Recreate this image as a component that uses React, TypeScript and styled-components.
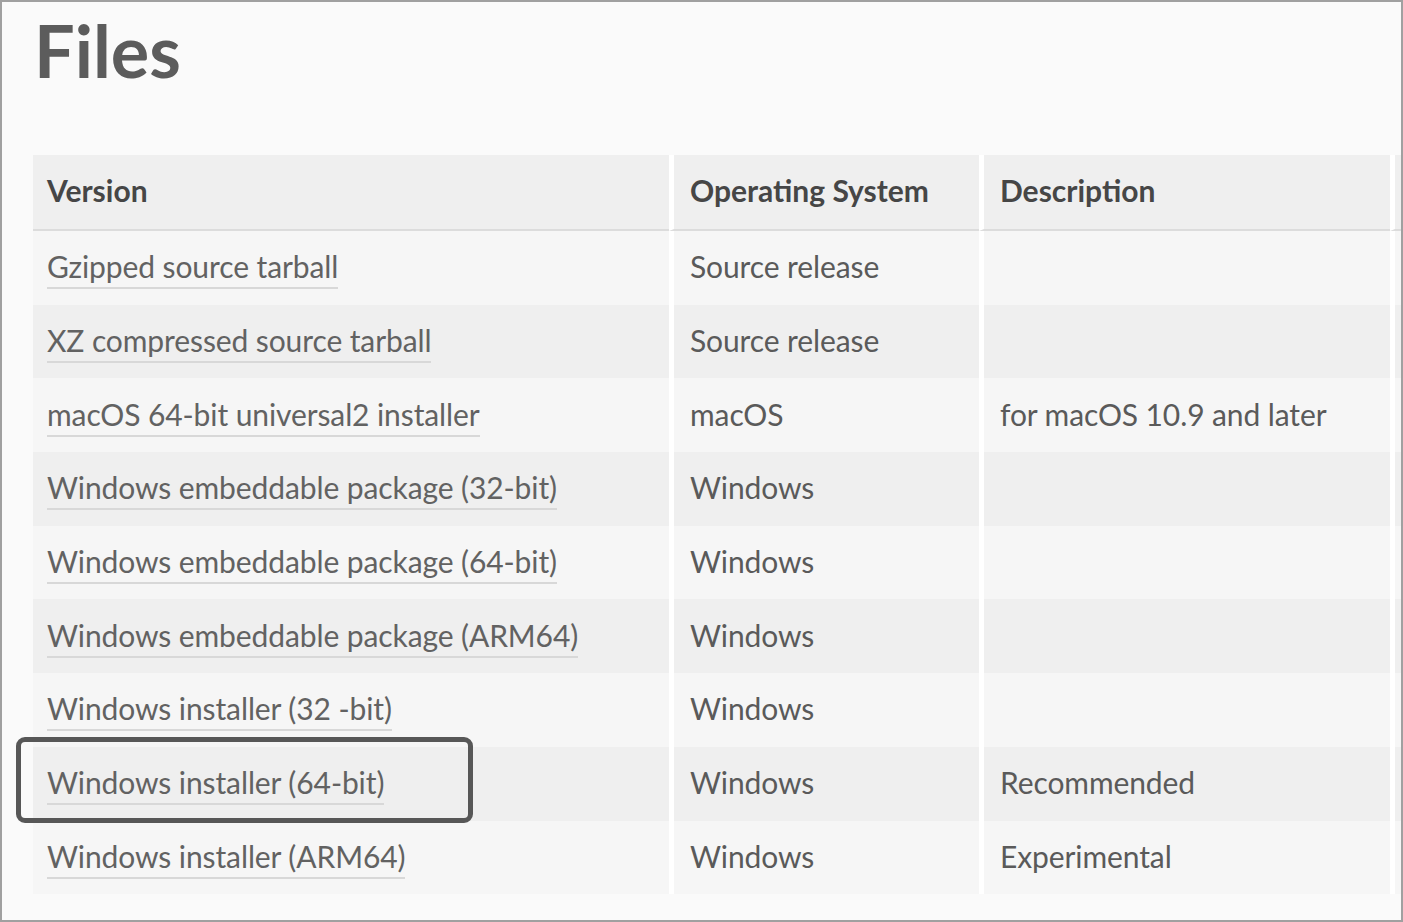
import React from "react";
import styled, { createGlobalStyle } from "styled-components";

const Global = createGlobalStyle`
  * { box-sizing: border-box; }
  html, body { margin: 0; padding: 0; background: #fafafa; }
  body { font-family: Lato, "Open Sans", sans-serif; }
`;

const Frame = styled.div`
  width: 1403px;
  height: 922px;
  border: 2px solid #a0a0a0;
  background: #fafafa;
  overflow: hidden;
  padding-left: 31px;
`;

const Title = styled.h1`
  margin: 12px 0 0 1px;
  font-family: Lato, sans-serif;
  font-weight: 700;
  font-size: 72px;
  line-height: 72px;
  color: #5c5c5c;
`;

const Table = styled.table`
  margin-top: 69px;
  border-collapse: separate;
  border-spacing: 0;
  table-layout: fixed;
  width: 1562px;
  font-family: Lato, sans-serif;
`;

const HeadCell = styled.th<{ $w: number; $first?: boolean }>`
  width: ${(p) => p.$w}px;
  height: 76px;
  padding: 0 14px 4px ${(p) => (p.$first ? 14 : 16)}px;
  text-align: left;
  vertical-align: middle;
  font-size: 30px;
  font-weight: 700;
  color: #464646;
  background: #efefef;
  border-bottom: 2px solid #dcdcdc;
  border-left: ${(p) => (p.$first ? "0" : "5px solid #ffffff")};
  white-space: nowrap;
`;

const Row = styled.tr<{ $shade: boolean }>`
  background: ${(p) => (p.$shade ? "#efefef" : "#f6f6f6")};
`;

const Cell = styled.td<{ $first?: boolean }>`
  position: relative;
  height: 73.7px;
  padding: 0 14px 3px ${(p) => (p.$first ? 14 : 16)}px;
  vertical-align: middle;
  font-size: 30px;
  letter-spacing: -0.1px;
  color: #5a5a5a;
  border-left: ${(p) => (p.$first ? "0" : "5px solid #ffffff")};
  white-space: nowrap;
`;

const FileLink = styled.a`
  color: #626262;
  text-decoration: none;
  padding-bottom: 3px;
  border-bottom: 2px solid #d8d8d8;
`;

const Highlight = styled.div`
  position: absolute;
  left: -17px;
  top: -10px;
  width: 457px;
  height: 86px;
  border: 5px solid #575757;
  border-radius: 9px;
  pointer-events: none;
`;

type FileRow = { name: string; os: string; desc: string; highlight?: boolean };

const rows: FileRow[] = [
  { name: "Gzipped source tarball", os: "Source release", desc: "" },
  { name: "XZ compressed source tarball", os: "Source release", desc: "" },
  { name: "macOS 64-bit universal2 installer", os: "macOS", desc: "for macOS 10.9 and later" },
  { name: "Windows embeddable package (32-bit)", os: "Windows", desc: "" },
  { name: "Windows embeddable package (64-bit)", os: "Windows", desc: "" },
  { name: "Windows embeddable package (ARM64)", os: "Windows", desc: "" },
  { name: "Windows installer (32 -bit)", os: "Windows", desc: "" },
  { name: "Windows installer (64-bit)", os: "Windows", desc: "Recommended", highlight: true },
  { name: "Windows installer (ARM64)", os: "Windows", desc: "Experimental" },
];

export default function App() {
  return (
    <>
      <Global />
      <Frame>
        <Title>Files</Title>
        <Table>
          <thead>
            <tr>
              <HeadCell $w={636} $first>Version</HeadCell>
              <HeadCell $w={310}>Operating System</HeadCell>
              <HeadCell $w={411}>Description</HeadCell>
              <HeadCell $w={205} />
            </tr>
          </thead>
          <tbody>
            {rows.map((r, i) => (
              <Row key={r.name} $shade={i % 2 === 1}>
                <Cell $first>
                  <FileLink href="#">{r.name}</FileLink>
                  {r.highlight && <Highlight />}
                </Cell>
                <Cell>{r.os}</Cell>
                <Cell>{r.desc}</Cell>
                <Cell />
              </Row>
            ))}
          </tbody>
        </Table>
      </Frame>
    </>
  );
}
